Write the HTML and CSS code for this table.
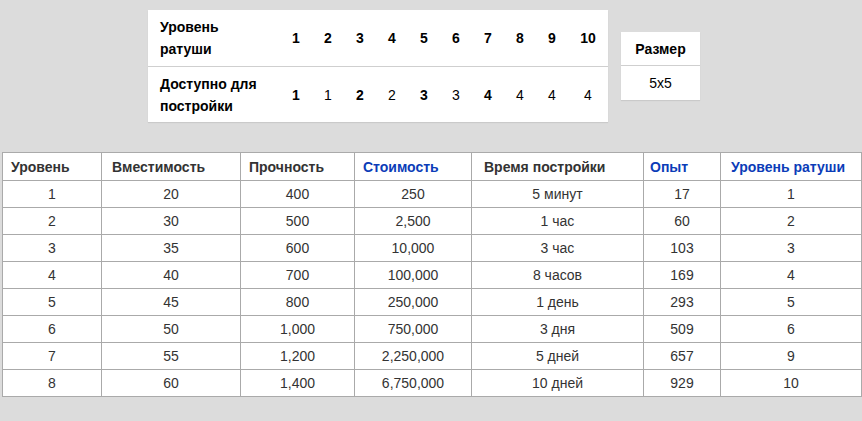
FILE: index.html
```html
<!DOCTYPE html>
<html lang="ru">
<head>
<meta charset="utf-8">
<link rel="stylesheet" href="styles.css">
</head>
<body>
<div class="top">
  <table class="levels">
    <colgroup>
      <col class="c-label"><col class="c-n"><col class="c-n"><col class="c-n"><col class="c-n"><col class="c-n"><col class="c-n"><col class="c-n"><col class="c-n"><col class="c-n"><col class="c-last">
    </colgroup>
    <tr class="r1">
      <th class="label">Уровень<br>ратуши</th>
      <th>1</th><th>2</th><th>3</th><th>4</th><th>5</th><th>6</th><th>7</th><th>8</th><th>9</th><th>10</th>
    </tr>
    <tr class="r2">
      <th class="label">Доступно для<br>постройки</th>
      <td class="b">1</td><td>1</td><td class="b">2</td><td>2</td><td class="b">3</td><td>3</td><td class="b">4</td><td>4</td><td>4</td><td>4</td>
    </tr>
  </table>
  <table class="size">
    <tr class="r1"><th>Размер</th></tr>
    <tr class="r2"><td>5x5</td></tr>
  </table>
</div>
<table class="main">
  <colgroup>
    <col class="w1"><col class="w2"><col class="w3"><col class="w4"><col class="w5"><col class="w6"><col class="w7">
  </colgroup>
  <thead>
    <tr>
      <th>Уровень</th>
      <th class="p2">Вместимость</th>
      <th>Прочность</th>
      <th class="blue">Стоимость</th>
      <th class="p5">Время постройки</th>
      <th class="blue p6">Опыт</th>
      <th class="blue p7">Уровень ратуши</th>
    </tr>
  </thead>
  <tbody>
    <tr><td>1</td><td>20</td><td>400</td><td>250</td><td>5 минут</td><td>17</td><td>1</td></tr>
    <tr><td>2</td><td>30</td><td>500</td><td>2,500</td><td>1 час</td><td>60</td><td>2</td></tr>
    <tr><td>3</td><td>35</td><td>600</td><td>10,000</td><td>3 час</td><td>103</td><td>3</td></tr>
    <tr><td>4</td><td>40</td><td>700</td><td>100,000</td><td>8 часов</td><td>169</td><td>4</td></tr>
    <tr><td>5</td><td>45</td><td>800</td><td>250,000</td><td>1 день</td><td>293</td><td>5</td></tr>
    <tr><td>6</td><td>50</td><td>1,000</td><td>750,000</td><td>3 дня</td><td>509</td><td>6</td></tr>
    <tr><td>7</td><td>55</td><td>1,200</td><td>2,250,000</td><td>5 дней</td><td>657</td><td>9</td></tr>
    <tr><td>8</td><td>60</td><td>1,400</td><td>6,750,000</td><td>10 дней</td><td>929</td><td>10</td></tr>
  </tbody>
</table>
</body>
</html>
```
FILE: styles.css
```css
html, body {
  margin: 0;
  padding: 0;
  background: #dcdcdc;
  font-family: "Liberation Sans", Arial, sans-serif;
  font-size: 14px;
}

.top {
  display: flex;
  align-items: flex-start;
  gap: 13px;
  padding: 10px 0 0 148px;
  height: 152px;
  box-sizing: border-box;
}

.levels, .size {
  border-collapse: collapse;
  table-layout: fixed;
  color: #000;
  box-shadow: 0 1px 1px rgba(0,0,0,0.08);
}

.levels { width: 460px; }
.c-label { width: 132px; }
.c-n { width: 32px; }
.c-last { width: 40px; }

.levels th, .levels td,
.size th, .size td {
  background: #fff;
  padding: 0;
  text-align: center;
  line-height: 22px;
}

.levels th { font-weight: bold; }
.levels td { font-weight: normal; }
.levels td.b { font-weight: bold; }

.levels .label {
  text-align: left;
  padding-left: 12px;
}

.levels .r1 th { height: 56px; border-bottom: 1px solid #cfcfcf; }
.levels .r2 th, .levels .r2 td { height: 55px; }

.size {
  width: 79px;
  margin-top: 22px;
}
.size .r1 th { height: 33px; font-weight: bold; border-bottom: 1px solid #cfcfcf; }
.size .r2 td { height: 34px; }

.main {
  margin-left: 2px;
  width: 859px;
  border-collapse: collapse;
  table-layout: fixed;
  background: #fff;
  color: #333;
  border: 1px solid #a9a9a9;
}

.w1 { width: 99px; }
.w2 { width: 139px; }
.w3 { width: 114px; }
.w4 { width: 117px; }
.w5 { width: 172px; }
.w6 { width: 77px; }
.w7 { width: 141px; }

.main th, .main td {
  border: 1px solid #aaaaaa;
  padding: 0;
}

.main th {
  height: 27px;
  text-align: left;
  padding-left: 8px;
  font-weight: bold;
  color: #333;
}

.main th.p2 { padding-left: 10px; }
.main th.p5 { padding-left: 12px; }
.main th.p6 { padding-left: 6px; }
.main th.p7 { padding-left: 10px; }
.main th.blue { color: #0b3cb8; }

.main td {
  height: 26px;
  text-align: center;
}
```
